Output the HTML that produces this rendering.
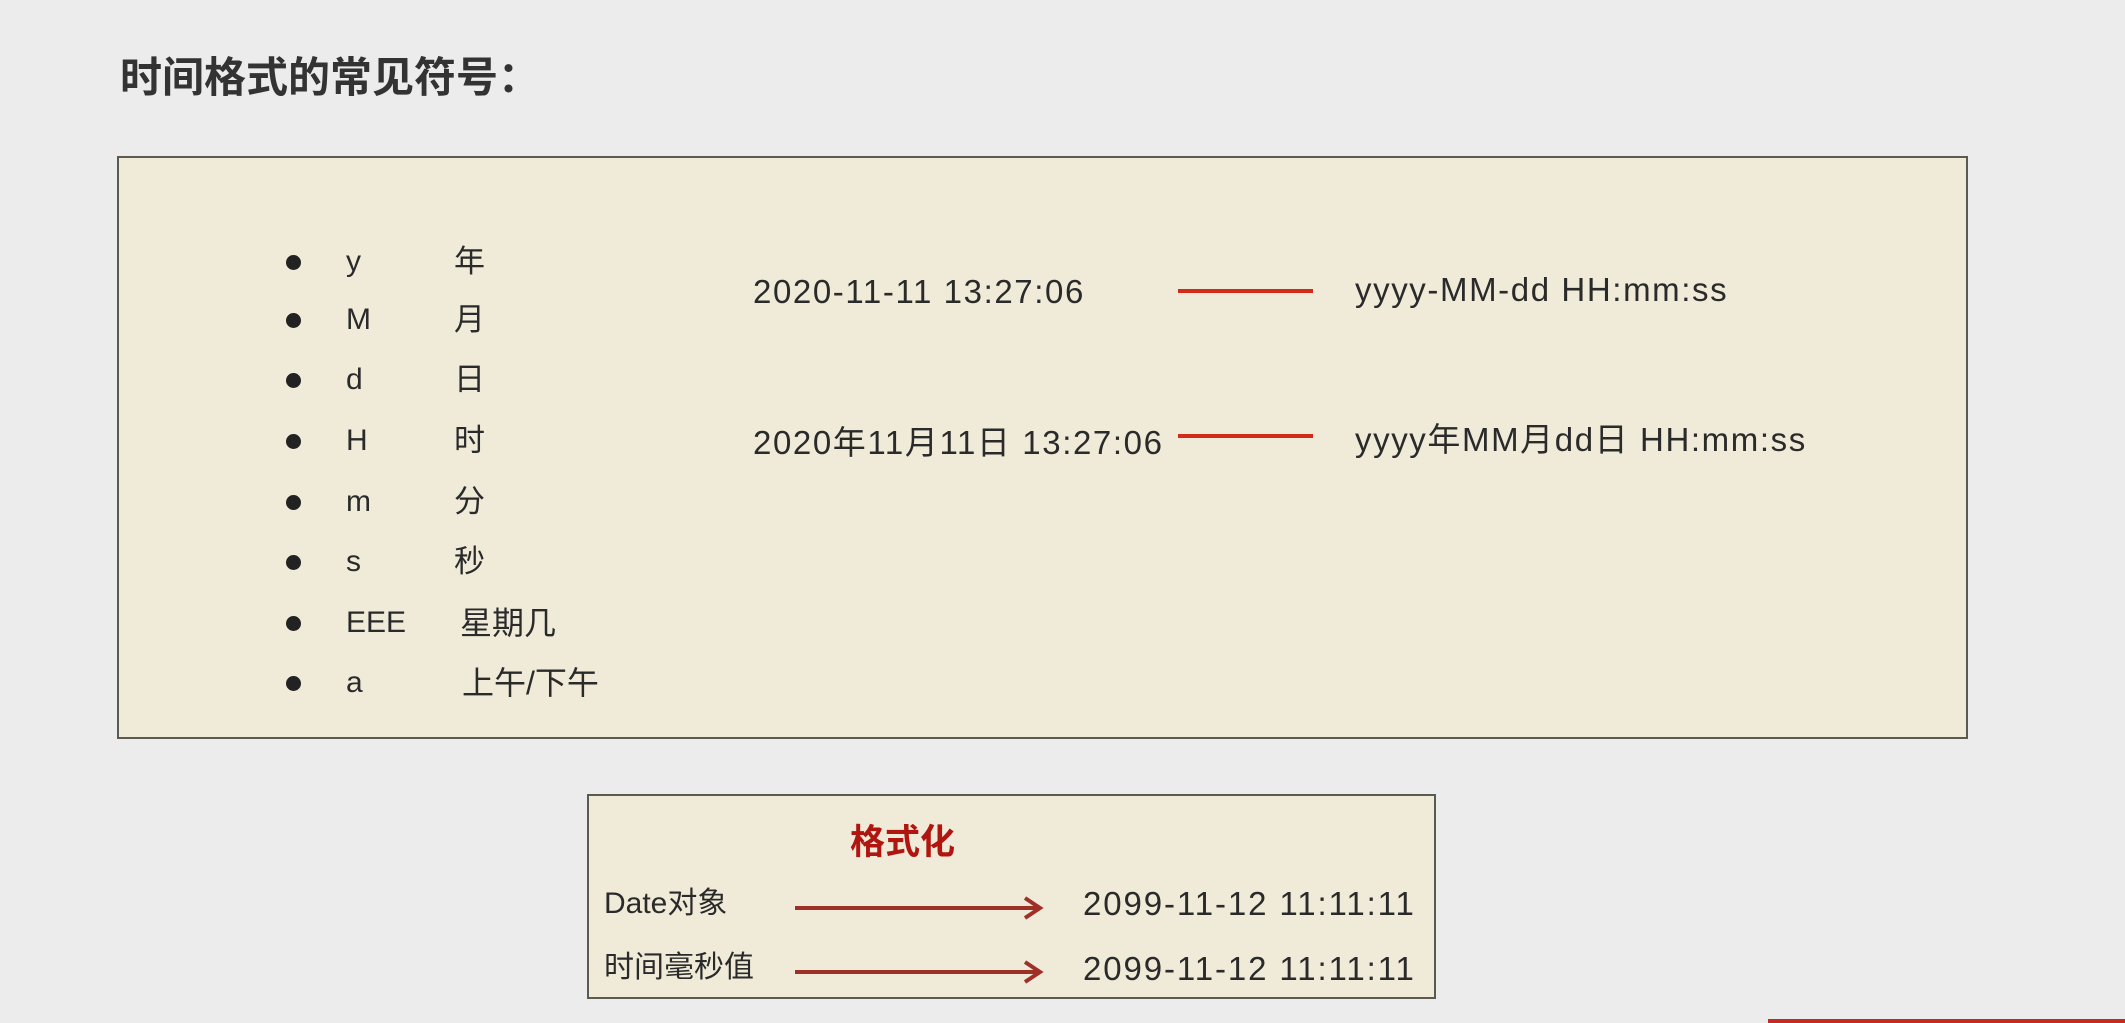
<!DOCTYPE html>
<html><head><meta charset="utf-8"><style>
body{margin:0;width:2125px;height:1023px;background:#ececec;position:relative;overflow:hidden;font-family:"Liberation Sans","Noto Sans CJK SC",sans-serif;color:#2a2a2a}
.a{position:absolute;white-space:nowrap;line-height:1}
.t{font-size:30px}
.n{font-size:33px;letter-spacing:1.6px}
.box{position:absolute;background:#efebd8;border:2px solid #5a5a52;box-sizing:border-box}
.dot{position:absolute;width:15px;height:15px;border-radius:50%;background:#222}
.rl{position:absolute;height:4px;background:#d42a1a}
</style></head><body>
<div class="a" style="left:120px;top:57px;font-size:42px;font-weight:bold;color:#333">时间格式的常见符号：</div>
<div class="box" style="left:117px;top:156px;width:1851px;height:583px"></div>

<div class="dot" style="left:286px;top:255px"></div><div class="a t" style="left:346px;top:247px">y</div><div class="a t" style="left:454px;top:246px;font-size:31px">年</div>
<div class="dot" style="left:286px;top:313px"></div><div class="a t" style="left:346px;top:305px">M</div><div class="a t" style="left:454px;top:304px;font-size:31px">月</div>
<div class="dot" style="left:286px;top:373px"></div><div class="a t" style="left:346px;top:365px">d</div><div class="a t" style="left:454px;top:364px;font-size:31px">日</div>
<div class="dot" style="left:286px;top:434px"></div><div class="a t" style="left:346px;top:426px">H</div><div class="a t" style="left:454px;top:425px;font-size:31px">时</div>
<div class="dot" style="left:286px;top:495px"></div><div class="a t" style="left:346px;top:487px">m</div><div class="a t" style="left:454px;top:486px;font-size:31px">分</div>
<div class="dot" style="left:286px;top:555px"></div><div class="a t" style="left:346px;top:547px">s</div><div class="a t" style="left:454px;top:546px;font-size:31px">秒</div>
<div class="dot" style="left:286px;top:616px"></div><div class="a t" style="left:346px;top:608px">EEE</div><div class="a t" style="left:460px;top:607px;font-size:32px">星期几</div>
<div class="dot" style="left:286px;top:676px"></div><div class="a t" style="left:346px;top:668px">a</div><div class="a t" style="left:462px;top:667px;font-size:32px">上午/下午</div>

<div class="a n" style="left:753px;top:275px">2020-11-11 13:27:06</div>
<div class="rl" style="left:1178px;top:289px;width:135px"></div>
<div class="a n" style="left:1355px;top:273px">yyyy-MM-dd HH:mm:ss</div>
<div class="a n" style="left:753px;top:426px">2020年11月11日 13:27:06</div>
<div class="rl" style="left:1178px;top:434px;width:135px"></div>
<div class="a n" style="left:1355px;top:423px">yyyy年MM月dd日 HH:mm:ss</div>

<div class="box" style="left:587px;top:794px;width:849px;height:205px"></div>
<div class="a" style="left:850px;top:825px;font-size:35px;font-weight:bold;color:#b01510">格式化</div>
<div class="a t" style="left:604px;top:889px;font-size:30px">Date对象</div>
<div class="a t" style="left:604px;top:953px;font-size:30px">时间毫秒值</div>
<svg class="a" style="left:790px;top:890px" width="260" height="100">
<g stroke="#9e3028" stroke-width="4" fill="none">
<line x1="5" y1="18" x2="250" y2="18"/><polyline points="235,8 250,18 235,28"/>
<line x1="5" y1="82" x2="250" y2="82"/><polyline points="235,72 250,82 235,92"/>
</g></svg>
<div class="a n" style="left:1083px;top:887px;letter-spacing:1.9px">2099-11-12 11:11:11</div>
<div class="a n" style="left:1083px;top:952px;letter-spacing:1.9px">2099-11-12 11:11:11</div>
<div style="position:absolute;left:1768px;top:1019px;width:357px;height:4px;background:#c42a20"></div>
</body></html>
